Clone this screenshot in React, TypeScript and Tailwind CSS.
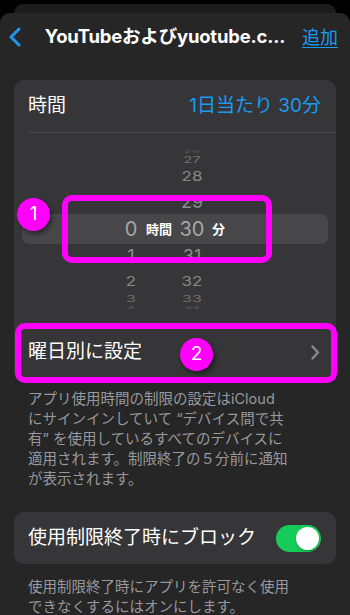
import React from "react";

type WheelRow = {
  hour: string;
  min: string;
  h: string;
  text: string;
  color: string;
  squash: string;
};

const above: WheelRow[] = [
  { hour: "", min: "26", h: "h-[8px]", text: "text-[13px]", color: "text-[#5c5c5e]", squash: "scale-y-[0.3]" },
  { hour: "", min: "27", h: "h-[9px]", text: "text-[15px]", color: "text-[#707072]", squash: "scale-y-[0.55]" },
  { hour: "", min: "28", h: "h-[25px]", text: "text-[17px]", color: "text-[#87878a]", squash: "scale-y-[0.8]" },
  { hour: "", min: "29", h: "h-[25px]", text: "text-[18px]", color: "text-[#8c8c8e]", squash: "scale-y-[0.95]" },
];

const below: WheelRow[] = [
  { hour: "1", min: "31", h: "h-[24px]", text: "text-[18px]", color: "text-[#8c8c8e]", squash: "scale-y-[0.95]" },
  { hour: "2", min: "32", h: "h-[26px]", text: "text-[17px]", color: "text-[#87878a]", squash: "scale-y-[0.8]" },
  { hour: "3", min: "33", h: "h-[10px]", text: "text-[16px]", color: "text-[#707072]", squash: "scale-y-[0.55]" },
  { hour: "4", min: "34", h: "h-[7px]", text: "text-[13px]", color: "text-[#5c5c5e]", squash: "scale-y-[0.3]" },
];

function Wheel({ row }: { row: WheelRow }) {
  return (
    <div className={`${row.h} flex items-center pl-[103px] leading-none ${row.text} ${row.color}`}>
      <span className={`w-[28px] text-center ${row.squash}`}>{row.hour}</span>
      <span className="w-[32px]" />
      <span className={`w-[30px] text-center ${row.squash}`}>{row.min}</span>
    </div>
  );
}

function Badge({ n, className }: { n: string; className: string }) {
  return (
    <div
      className={`absolute w-[33px] h-[33px] rounded-full bg-[#ff00ff] text-white text-[19px] flex items-center justify-center shadow-[2px_3px_5px_rgba(0,0,0,0.45)] ${className}`}
    >
      {n}
    </div>
  );
}

export default function App() {
  return (
    <div className="relative w-[350px] h-[615px] overflow-hidden bg-black font-[Inter,'Noto_Sans_CJK_JP',sans-serif] text-white">
      <div className="pt-[4px]">
        <div className="mx-[14px] h-[9px] rounded-t-[10px] bg-[#1c1c1c]" />
        <div className="h-[602px] rounded-t-[10px] bg-[#262626]">
          {/* nav */}
          <div className="h-[48px] flex items-center">
            <div className="w-[28px] pl-[8px]">
              <svg width="14" height="20" viewBox="0 0 14 20" fill="none">
                <path d="M11 2 L3 10 L11 18" stroke="#1a9bf2" strokeWidth="3" strokeLinecap="round" strokeLinejoin="round" />
              </svg>
            </div>
            <div className="flex-1 text-center text-[18.5px] font-bold tracking-[-0.2px] whitespace-nowrap">
              YouTubeおよびyuotube.c...
            </div>
            <div className="pr-[12px] text-[18px] text-[#1a9bf2] underline underline-offset-[3px]">追加</div>
          </div>

          {/* time card */}
          <div className="mt-[19px] mx-[14px] rounded-[10px] bg-[#363638]">
            <div className="h-[52px] flex items-center justify-between pl-[14px] pr-[15px] text-[19px]">
              <span>時間</span>
              <span className="text-[#1a9bf2]">1日当たり 30分</span>
            </div>
            <div className="ml-[14px] h-px bg-[#48484a]" />
            <div className="h-[190px] overflow-hidden">
              <div className="h-[14px]" />
              {above.map((r) => (
                <Wheel key={r.min} row={r} />
              ))}
              <div className="mx-[8px] h-[30px] rounded-[7px] bg-[#474749] flex items-center pl-[95px] leading-none">
                <span className="w-[28px] text-center text-[20px] text-[#a6a6a8]">0</span>
                <span className="w-[32px] pl-[1px] text-[13px] font-bold">時間</span>
                <span className="w-[30px] text-center text-[20px] text-[#a6a6a8]">30</span>
                <span className="pl-[5px] text-[13px] font-bold">分</span>
              </div>
              {below.map((r) => (
                <Wheel key={r.min} row={r} />
              ))}
            </div>
            <div className="h-[59px] flex items-center justify-between pl-[14px] pr-[16px] text-[19px]">
              <span>曜日別に設定</span>
              <svg width="9" height="15" viewBox="0 0 9 15" fill="none">
                <path d="M1.5 1.5 L7 7.5 L1.5 13.5" stroke="#8a8a8e" strokeWidth="2.4" strokeLinecap="round" strokeLinejoin="round" />
              </svg>
            </div>
          </div>

          <div className="mt-[7px] px-[28px] text-[14.5px] leading-[20px] text-[#98989d] whitespace-nowrap">
            <div>アプリ使用時間の制限の設定はiCloud</div>
            <div>にサインインしていて “デバイス間で共</div>
            <div>有” を使用しているすべてのデバイスに</div>
            <div>適用されます。制限終了の５分前に通知</div>
            <div>が表示されます。</div>
          </div>

          {/* block card */}
          <div className="mt-[23px] mx-[14px] h-[52px] rounded-[10px] bg-[#363638] flex items-center justify-between pl-[14px] pr-[15px] text-[19px]">
            <span>使用制限終了時にブロック</span>
            <div className="w-[45px] h-[27px] rounded-full bg-[#16cc58] flex items-center justify-end pr-[2px]">
              <div className="w-[23px] h-[23px] rounded-full bg-white shadow-[0_1px_2px_rgba(0,0,0,0.3)]" />
            </div>
          </div>

          <div className="mt-[13px] px-[28px] text-[14.5px] leading-[20px] text-[#98989d] whitespace-nowrap">
            <div>使用制限終了時にアプリを許可なく使用</div>
            <div>できなくするにはオンにします。</div>
          </div>
        </div>
      </div>

      {/* annotations */}
      <div className="absolute left-[62px] top-[195px] w-[210px] h-[68px] rounded-[10px] border-[6px] border-[#ff00ff]" />
      <div className="absolute left-[15px] top-[323px] w-[322px] h-[60px] rounded-[10px] border-[6px] border-[#ff00ff]" />
      <Badge n="1" className="left-[17px] top-[198px]" />
      <Badge n="2" className="left-[180px] top-[338px]" />
    </div>
  );
}
